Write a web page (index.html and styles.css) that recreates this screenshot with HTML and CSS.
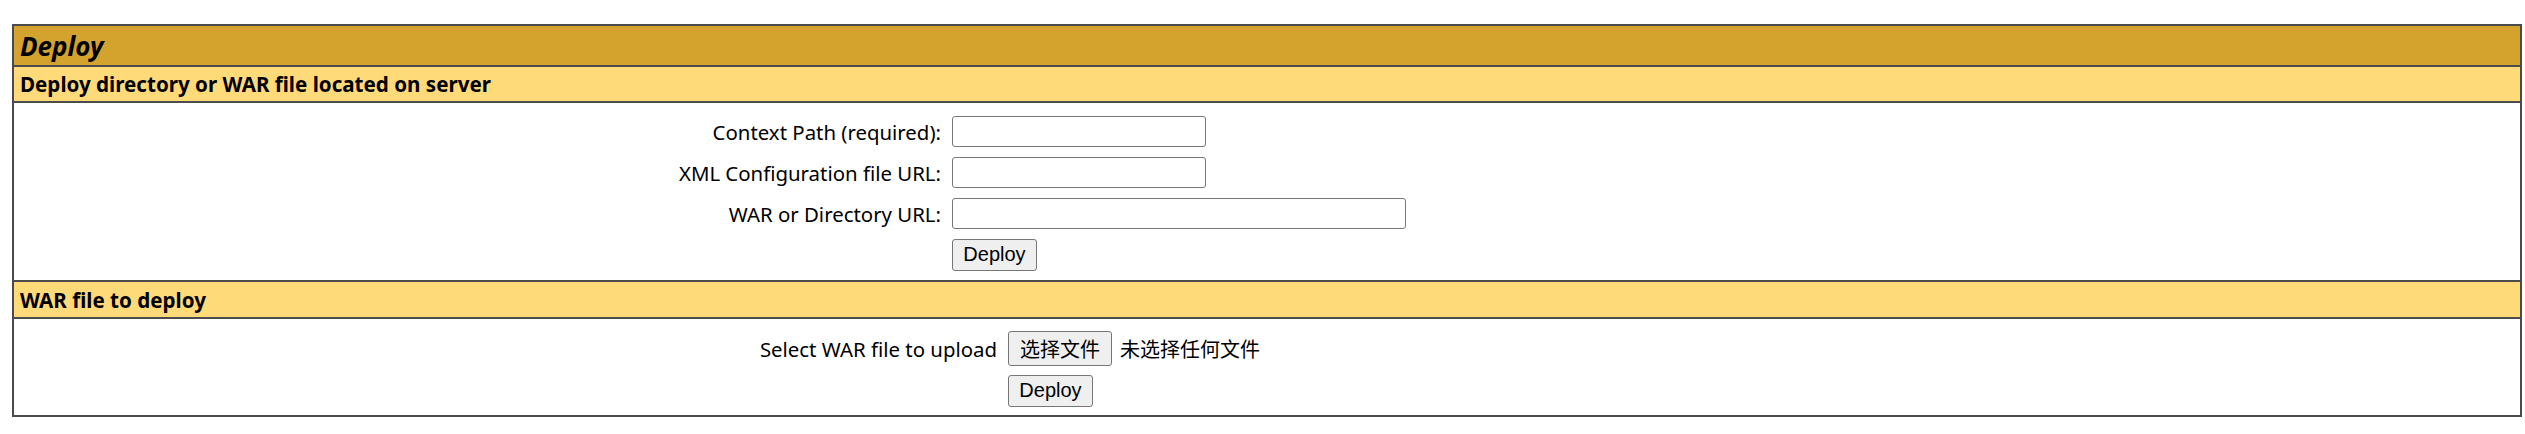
FILE: index.html
```html
<!DOCTYPE html>
<html lang="zh-CN">
<head>
<meta charset="utf-8">
<title>Deploy</title>
<link rel="stylesheet" href="styles.css">
</head>
<body>
<div class="panel">
  <div class="title">Deploy</div>
  <div class="subhead">Deploy directory or WAR file located on server</div>
  <form class="body form-server">
    <label class="lbl">Context Path (required):</label>
    <div class="field"><input type="text" class="txt size20"></div>
    <label class="lbl">XML Configuration file URL:</label>
    <div class="field"><input type="text" class="txt size20"></div>
    <label class="lbl">WAR or Directory URL:</label>
    <div class="field"><input type="text" class="txt size40"></div>
    <div class="lbl"></div>
    <div class="field"><button type="button" class="btn deploy">Deploy</button></div>
  </form>
  <div class="subhead sub2">WAR file to deploy</div>
  <form class="body form-upload">
    <label class="lbl">Select WAR file to upload</label>
    <div class="field"><span class="btn filebtn">选择文件</span><span class="nofile">未选择任何文件</span></div>
    <div class="lbl"></div>
    <div class="field"><button type="button" class="btn deploy">Deploy</button></div>
  </form>
</div>
</body>
</html>
```

FILE: styles.css
```css
html, body {
  margin: 0;
  padding: 0;
  background: #ffffff;
}

body {
  font-family: "Noto Sans", "Noto Sans CJK SC", sans-serif;
  color: #000;
}

.panel {
  margin: 24px 3px 0 12px;
  border: 2px solid #4b4b4b;
}

.title {
  height: 39px;
  display: flex;
  align-items: center;
  padding-left: 6px;
  background: #d4a32e;
  font-size: 26px;
  font-weight: bold;
  font-style: italic;
  border-bottom: 2px solid #4b4b4b;
}

.subhead {
  height: 34px;
  display: flex;
  align-items: center;
  padding-left: 6px;
  background: #ffda78;
  font-size: 20.6px;
  font-weight: bold;
  border-bottom: 2px solid #4b4b4b;
}

.sub2 {
  height: 35px;
}

.body {
  margin: 0;
  display: grid;
  align-items: center;
  border-bottom: 2px solid #4b4b4b;
}

.body:last-child {
  border-bottom: none;
}

.form-server {
  grid-template-columns: 932fr 1574fr;
  grid-auto-rows: 41px;
  padding: 8px 0 5px;
}

.form-upload {
  grid-template-columns: 988fr 1518fr;
  grid-template-rows: 43px 41px;
  padding: 8px 0 4px;
}

.lbl {
  text-align: right;
  padding-right: 5px;
  font-size: 20.4px;
}

.field {
  display: flex;
  align-items: center;
  padding-left: 6px;
}

.txt {
  box-sizing: border-box;
  height: 31px;
  border: 1px solid #767676;
  border-radius: 3px;
  background: #fff;
  margin: 0;
  padding: 0 4px;
}

.size20 {
  width: 254px;
}

.size40 {
  width: 454px;
}

.btn {
  box-sizing: border-box;
  display: inline-flex;
  align-items: center;
  justify-content: center;
  margin: 0;
  background: #efefef;
  border: 1px solid #767676;
  border-radius: 3px;
  color: #000;
}

.deploy {
  width: 85px;
  height: 32px;
  padding: 0;
  font-family: "Liberation Sans", Arial, sans-serif;
  font-size: 20px;
}

.filebtn {
  width: 104px;
  height: 35px;
  font-family: "Noto Sans CJK SC", sans-serif;
  font-size: 20px;
}

.nofile {
  margin-left: 8px;
  font-family: "Noto Sans CJK SC", sans-serif;
  font-size: 20px;
}
```
